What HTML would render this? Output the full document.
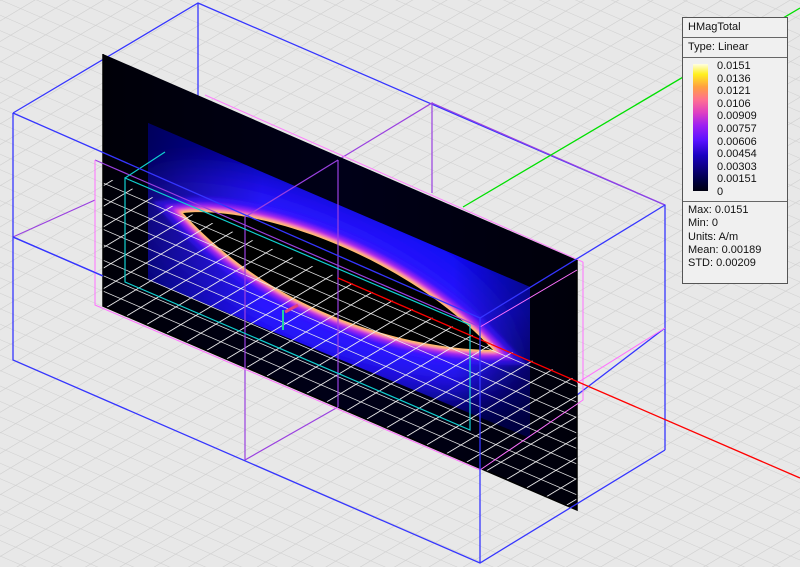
<!DOCTYPE html>
<html><head><meta charset="utf-8"><style>
html,body{margin:0;padding:0;background:#e8e8e8;}
svg{display:block}
#leg{position:absolute;left:682px;top:17px;width:104px;height:265px;background:#f0f0f0;border:1px solid #555;font-family:"Liberation Sans",sans-serif;font-size:11px;color:#111;}
#leg .r{border-bottom:1px solid #666;padding:2px 0 0 5px;height:17px;box-sizing:border-box}
#bar{position:absolute;left:10px;top:46px;width:15px;height:127px;background:linear-gradient(to top,#000010,#000040 8%,#1a00c0 28%,#5a10ff 40%,#a020f0 52%,#e040c0 62%,#ff7090 72%,#ffa040 82%,#fff020 92%,#ffffe0)}
#lab{position:absolute;left:34px;top:42px;line-height:12.6px}
#st{position:absolute;left:5px;top:186px;line-height:13.3px}
</style></head><body>
<svg width="800" height="567" viewBox="0 0 800 567" style="position:absolute;left:0;top:0">
<defs>
<pattern id="g" patternUnits="userSpaceOnUse" width="1" height="1" patternTransform="matrix(20 8.6 15 -9 0 0)">
<path d="M0 0H1M0 0V1" stroke="#cfcfcf" stroke-width="0.07" fill="none"/>
</pattern>
<pattern id="gw" patternUnits="userSpaceOnUse" width="1" height="1" patternTransform="matrix(20 8.6 15 -9 0 0)">
<path d="M0 0H1M0 0V1" stroke="#f0f0f0" stroke-width="0.1" fill="none"/>
</pattern>
<linearGradient id="pl" x1="0" y1="0" x2="1" y2="0">
<stop offset="0" stop-color="#000008"/><stop offset="0.5" stop-color="#000018"/><stop offset="1" stop-color="#00000a"/>
</linearGradient>
<linearGradient id="bl" gradientUnits="userSpaceOnUse" x1="340" y1="150" x2="340" y2="420">
<stop offset="0" stop-color="#0000a0"/><stop offset="0.35" stop-color="#0a0af0"/><stop offset="0.6" stop-color="#1010f0"/><stop offset="1" stop-color="#000050"/>
</linearGradient>
<linearGradient id="bh" x1="0" y1="0" x2="1" y2="0">
<stop offset="0" stop-color="#000030" stop-opacity="0.6"/><stop offset="0.3" stop-color="#000030" stop-opacity="0"/><stop offset="0.8" stop-color="#000030" stop-opacity="0"/><stop offset="1" stop-color="#000030" stop-opacity="0.5"/>
</linearGradient>
<filter id="b1" x="-50%" y="-50%" width="200%" height="200%"><feGaussianBlur stdDeviation="18"/></filter>
<filter id="b2" x="-20%" y="-20%" width="140%" height="140%"><feGaussianBlur stdDeviation="1.5"/></filter>
<clipPath id="cp"><polygon points="103,176 577,380 577,510 103,306"/></clipPath>
<clipPath id="cb"><polygon points="148,123 530,287 530,438 148,280"/></clipPath>
<path id="eye" d="M183,213 C250,205 400,250 493,350 C420,350 280,320 183,213Z"/>
</defs>
<rect width="800" height="567" fill="#e8e8e8"/>
<rect width="800" height="567" fill="url(#g)"/>
<g stroke="#3535ff" stroke-width="1.3" fill="none">
<path d="M13,113 L198,3 L665,205 L665,450 M198,3 V120 M13,237 L103,276 M577,395 L665,328"/>
</g>
<path d="M338,160 L432,103 V193 M432,103 L665,205" stroke="#9a40e0" stroke-width="1.2" fill="none"/>
<path d="M205,95 L583,262" stroke="#ff80ff" stroke-width="1" fill="none"/>
<polygon points="103,54 577,260 577,510 103,306" fill="url(#pl)"/>
<polygon points="148,123 530,287 530,438 148,280" fill="url(#bl)"/>
<g clip-path="url(#cb)">
<ellipse cx="320" cy="280" rx="210" ry="75" fill="#2a18ff" filter="url(#b1)" transform="rotate(24 320 280)"/>
</g>
<polygon points="148,123 530,287 530,438 148,280" fill="url(#bh)"/>
<g filter="url(#b2)">
<use href="#eye" fill="none" stroke="#3a10ff" stroke-width="30" opacity="0.6"/>
<use href="#eye" fill="none" stroke="#9020f0" stroke-width="18"/>
<use href="#eye" fill="none" stroke="#ff50c0" stroke-width="9"/>
<use href="#eye" fill="none" stroke="#ffd040" stroke-width="4"/>
</g>
<use href="#eye" fill="#000"/>
<rect width="800" height="567" fill="url(#gw)" clip-path="url(#cp)"/>
<path d="M103,54 V306 L577,510 V260" stroke="#000" stroke-width="1.5" fill="none"/>
<g fill="none">
<path d="M245,217 V460 L338,407 M338,160 V407 M245,217 L338,160 M95,160 L480,327 M13,237 L95,200" stroke="#9a40e0" stroke-width="1.2"/>
<path d="M95,160 V305 L480,470 V325 M577,383 L665,328 M480,327 L577,270 M583,262 V400 L480,470" stroke="#ff70ff" stroke-width="1"/>
<path d="M125,178 V282 L470,430 V325 Z M125,178 L165,152" stroke="#10d0d0" stroke-width="1.2"/>
</g>
<path d="M338,278 L800,478" stroke="#ff0000" stroke-width="1.3"/>
<path d="M463,207 L800,8" stroke="#00e000" stroke-width="1.3"/>
<path d="M283,310 V330" stroke="#20d0a0" stroke-width="2"/>
<path d="M285,312 L298,305" stroke="#e04080" stroke-width="3"/>
<g stroke="#3535ff" stroke-width="1.3" fill="none">
<path d="M13,113 L480,318 L665,205 M13,113 V360 L480,563 L665,450 M480,318 V563 M13,237 L103,276"/>
</g>
</svg>
<div id="leg">
<div class="r" style="height:20px;padding-top:3px">HMagTotal</div>
<div class="r" style="height:20px;padding-top:3px">Type: Linear</div>
<div id="bar"></div>
<div id="lab">0.0151<br>0.0136<br>0.0121<br>0.0106<br>0.00909<br>0.00757<br>0.00606<br>0.00454<br>0.00303<br>0.00151<br>0</div>
<div style="position:absolute;left:0;right:0;top:183px;border-top:1px solid #666"></div>
<div id="st">Max: 0.0151<br>Min: 0<br>Units: A/m<br>Mean: 0.00189<br>STD: 0.00209</div>
</div>
</body></html>
